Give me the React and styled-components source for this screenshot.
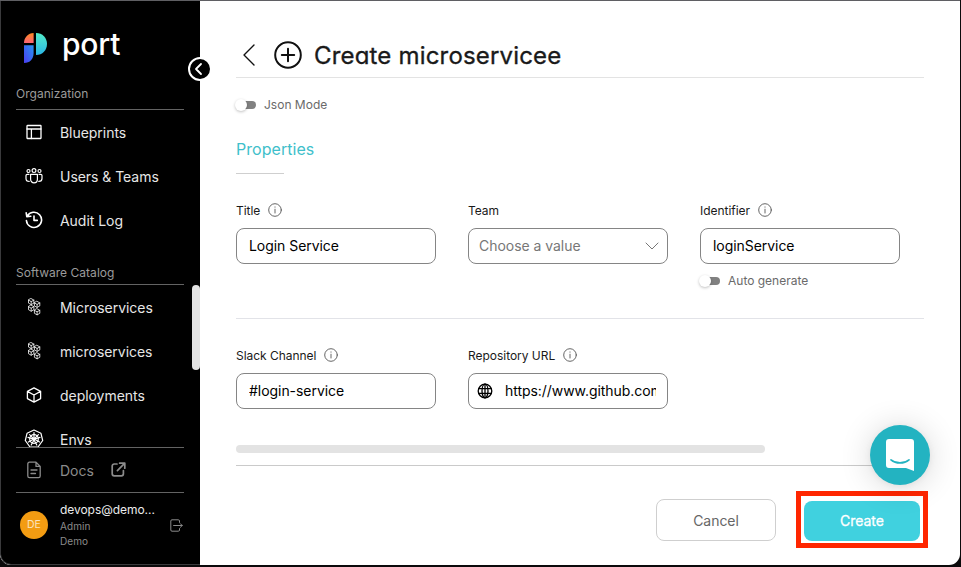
import React from "react";
import styled, { createGlobalStyle } from "styled-components";

const Global = createGlobalStyle`
  * { box-sizing: border-box; }
  html, body { margin: 0; padding: 0; background: #161415; }
  body { font-family: Inter, "Liberation Sans", sans-serif; overflow: hidden; }
  button, input { font-family: inherit; }
  svg { display: block; flex: none; }
`;

const Window = styled.div`
  position: relative;
  display: flex;
  width: 960px;
  height: 565px;
  border-top: 1px solid #5f5f63;
  border-radius: 0 0 11px 11px;
  background: #fff;
  overflow: hidden;
`;

const Backdrop = styled.div`
  width: 961px;
  height: 567px;
  background: #0b0a0b;
`;

const Sidebar = styled.aside`
  display: flex;
  flex-direction: column;
  flex: none;
  width: 200px;
  padding: 0 16px 0 15px;
  background: #000;
  color: #e4e4e4;
  border-left: 1px solid #3a3a3c;
  border-bottom: 1px solid #3a3a3c;
  border-radius: 0 0 0 11px;
`;

const Brand = styled.div`
  display: flex;
  gap: 14px;
  height: 83px;
  padding: 32px 0 0 8px;
`;

const BrandName = styled.span`
  margin-top: -9px;
  font-size: 30px;
  font-weight: 500;
  line-height: 40px;
  letter-spacing: -0.2px;
  color: #fff;
`;

const Nav = styled.nav`
  height: 363px;
  overflow: hidden;
`;

const GroupLabel = styled.div`
  height: ${(p) => (p.$spaced ? 42 : 26)}px;
  margin-bottom: 1px;
  padding-top: ${(p) => (p.$spaced ? 22 : 2)}px;
  border-bottom: 1px solid #636363;
  font-size: 12px;
  line-height: 16px;
  letter-spacing: 0.03px;
  color: #9b9b9b;
`;

const NavItem = styled.a`
  display: flex;
  align-items: center;
  height: 44px;
  padding-bottom: ${(p) => (p.$muted ? 0 : 2)}px;
  color: ${(p) => (p.$muted ? "#8b8b8b" : "#e6e6e6")};
  font-size: 14px;
  letter-spacing: -0.04px;
`;

const IconSlot = styled.span`
  display: flex;
  justify-content: center;
  width: 36px;
  margin-right: 8px;
  color: ${(p) => (p.$muted ? "#8b8b8b" : "#fff")};
`;

const External = styled.span`
  margin: 0 0 2px 17px;
`;

const SideFooter = styled.div`
  height: 46px;
  border-top: 1px solid #636363;
  border-bottom: 1px solid #636363;
`;

const User = styled.div`
  display: flex;
  align-items: center;
  height: 65px;
  padding-left: 4px;
  color: #8b8b8b;
`;

const Avatar = styled.div`
  display: grid;
  place-items: center;
  flex: none;
  width: 28px;
  height: 28px;
  margin-bottom: 2px;
  border-radius: 50%;
  background: #f39c12;
  color: #fbe3bd;
  font-size: 10.5px;
`;

const UserText = styled.div`
  flex: none;
  width: 110px;
  margin-left: 12px;
  padding-bottom: 1px;
  font-size: 10px;
  line-height: 15px;
  letter-spacing: 0.08px;
  color: #8b8b8b;
`;

const UserName = styled.div`
  padding-bottom: 1px;
  font-size: 12px;
  line-height: 16px;
  letter-spacing: -0.05px;
  color: #ececec;
`;

const SideScroll = styled.div`
  position: absolute;
  left: 192px;
  top: 284px;
  width: 8px;
  height: 85px;
  border-radius: 4px;
  background: #e3e3e3;
`;

const Collapse = styled.button`
  position: absolute;
  left: 188px;
  top: 56px;
  display: grid;
  place-items: center;
  width: 24px;
  height: 24px;
  padding: 0 2px 0 0;
  border: 2px solid #fff;
  border-radius: 50%;
  background: #000;
  color: #fff;
`;

const Main = styled.main`
  flex: 1;
  display: flex;
  flex-direction: column;
  padding: 0 36px;
`;

const Header = styled.header`
  display: flex;
  align-items: center;
  gap: 17px;
  height: 77px;
  padding: 31px 0 0 5px;
  border-bottom: 1px solid #e3e3e3;
  color: #111;
`;

const Title = styled.h1`
  margin: 2px 0 0 -5px;
  font-size: 24px;
  line-height: 30px;
  font-weight: 400;
  font-feature-settings: "cv11";
  letter-spacing: 0.18px;
  -webkit-text-stroke: 0.35px #1a1a1a;
  color: #1a1a1a;
`;

const Toggle = styled.label`
  display: flex;
  align-items: center;
  height: 16px;
  margin-top: ${(p) => p.$top}px;
  font-size: 12px;
  letter-spacing: 0;
  color: #6a6a6a;
`;

const ToggleText = styled.span`
  padding-bottom: 1px;
`;

const Track = styled.span`
  display: flex;
  align-items: center;
  width: 18px;
  height: 8px;
  margin: 0 8px 0 2px;
  border-radius: 4px;
  background: #818181;
`;

const Knob = styled.span`
  flex: none;
  width: 12px;
  height: 12px;
  margin-left: -3px;
  border-radius: 50%;
  background: #fff;
  box-shadow: 0 1px 3px rgba(0, 0, 0, 0.25);
`;

const SectionTitle = styled.h2`
  width: 48px;
  height: 36px;
  margin: 25px 0 27px;
  border-bottom: 1px solid #cfcfcf;
  font-size: 16px;
  line-height: 22px;
  font-weight: 400;
  letter-spacing: 0.05px;
  color: #3fbfcb;
`;

const FieldRow = styled.div`
  display: grid;
  grid-template-columns: repeat(3, 200px);
  column-gap: 32px;
  height: ${(p) => p.$height}px;
  padding-top: ${(p) => p.$top || 0}px;
  border-bottom: ${(p) => (p.$divider ? "1px solid #e2e3e8" : "none")};
`;

const FieldLabel = styled.div`
  display: flex;
  align-items: center;
  gap: 8px;
  height: 18px;
  margin-bottom: 9px;
  font-size: 12px;
  letter-spacing: -0.03px;
  color: #1a1a1a;
`;

const InfoSlot = styled.span`
  color: #555;
`;

const Control = styled.div`
  display: flex;
  align-items: center;
  height: 36px;
  padding: 0 ${(p) => (p.$select ? 8 : 11)}px 0 ${(p) => p.$left}px;
  border: 1px solid #858585;
  border-radius: 8px;
  font-size: 14px;
  letter-spacing: ${(p) => (p.$select ? -0.04 : -0.05)}px;
  color: ${(p) => (p.$select ? "#777" : "#000")};
`;

const Value = styled.span`
  flex: 1;
  overflow: hidden;
  white-space: nowrap;
  padding-bottom: 2px;
  margin-left: ${(p) => (p.$afterIcon ? 12 : 0)}px;
`;

const ScrollArea = styled.div`
  flex: none;
  height: 21px;
  border-bottom: 1px solid #cacaca;
`;

const ScrollThumb = styled.div`
  width: 529px;
  height: 8px;
  border-radius: 4px;
  background: #e3e3e3;
`;

const Actions = styled.footer`
  display: flex;
  justify-content: flex-end;
  gap: 20px;
  margin: 25px -4px 0 0;
`;

const Button = styled.button`
  width: ${(p) => (p.$primary ? 116 : 120)}px;
  height: ${(p) => (p.$primary ? 40 : 42)}px;
  margin-top: ${(p) => (p.$primary ? 0 : 8)}px;
  padding: 0 0 ${(p) => (p.$primary ? 1 : 0)}px;
  border: ${(p) => (p.$primary ? "none" : "1px solid #cfcfcf")};
  border-radius: 8px;
  background: ${(p) => (p.$primary ? "#40d1df" : "#fff")};
  color: ${(p) => (p.$primary ? "#fff" : "#666")};
  font-size: 14px;
  letter-spacing: -0.04px;
  -webkit-text-stroke: ${(p) => (p.$primary ? "0.3px #fff" : "0")};
`;

const Highlight = styled.div`
  display: grid;
  place-items: center;
  width: 132px;
  height: 57px;
  padding-top: 3px;
  border: 5px solid #ff2600;
`;

const Chat = styled.button`
  position: absolute;
  left: 870px;
  top: 424px;
  display: grid;
  place-items: center;
  width: 60px;
  height: 60px;
  padding: 0;
  border: none;
  border-radius: 50%;
  background: #23b3c1;
  box-shadow: 0 1px 6px rgba(0, 0, 0, 0.06), 0 2px 32px rgba(0, 0, 0, 0.16);
`;

const Stroke = ({ w = 18, h, box = "0 0 24 24", sw = 1.8, children }) => (
  <svg width={w} height={h || w} viewBox={box} fill="none" stroke="currentColor"
    strokeWidth={sw} strokeLinecap="round" strokeLinejoin="round">{children}</svg>
);

const PortMark = () => (
  <svg width="24" height="31" viewBox="0 0 24 31">
    <defs>
      <linearGradient id="warm" x1="0" y1="0" x2="0" y2="1">
        <stop offset="0" stopColor="#ff8a1f" /><stop offset="1" stopColor="#fb6377" />
      </linearGradient>
      <linearGradient id="teal" x1="0" y1="0" x2="0" y2="1">
        <stop offset="0" stopColor="#52ecc8" /><stop offset="1" stopColor="#2bb5e6" />
      </linearGradient>
      <linearGradient id="blue" x1="1" y1="0" x2="0" y2="1">
        <stop offset="0" stopColor="#2795f3" /><stop offset="1" stopColor="#4b3df2" />
      </linearGradient>
    </defs>
    <path d="M9.6 0V10H0C0 4.5 4.2 0 9.6 0Z" fill="url(#warm)" />
    <path d="M0 12.2H9.6V20C9.6 26 6 30 0 30Z" fill="url(#blue)" />
    <path d="M12 0C18.5 0 23 4.8 23 11C23 17.2 18.5 22 12 22Z" fill="url(#teal)" />
  </svg>
);

const LayoutIcon = () => (
  <Stroke w={16} box="0 0 16 16" sw={1.3}>
    <rect x="1" y="1.5" width="14" height="13" rx="0.4" /><path d="M1 5H15M5.4 5V14.5" />
  </Stroke>
);

const TeamIcon = () => (
  <Stroke w={18} h={16} box="0 0 18 16" sw={1.2}>
    <circle cx="9" cy="2.6" r="1.9" /><circle cx="3.5" cy="3" r="1.5" /><circle cx="14.5" cy="3" r="1.5" />
    <path d="M5.6 6.3H12.4V11.2C12.4 13.2 11 14.8 9 14.8S5.6 13.2 5.6 11.2Z" />
    <path d="M4 6.3H2.2C1.4 6.3 1 6.8 1 7.5V10.5C1 12.3 2.2 13.4 4.2 13.4M14 6.3H15.8C16.6 6.3 17 6.8 17 7.5V10.5C17 12.3 15.8 13.4 13.8 13.4" />
  </Stroke>
);

const HistoryIcon = () => (
  <Stroke w={18} box="0 0 18 18" sw={1.6}>
    <path d="M2.3 5.2A7.6 7.6 0 1 1 1.4 9.5M1.2 1.8L1.8 5.6L5.8 5.2M9 5V9.4H12.3" />
  </Stroke>
);

const Cube = ({ x, y }) => (
  <g transform={`translate(${x} ${y})`}>
    <path d="M0 -3L2.7 -1.5V1.5L0 3L-2.7 1.5V-1.5ZM-2.7 -1.5L0 0L2.7 -1.5M0 0V3" />
  </g>
);

const CubesIcon = () => (
  <Stroke w={14} h={18} box="0 0 14 18" sw={0.8}>
    <Cube x={4.2} y={3.6} /><Cube x={10.1} y={6.4} /><Cube x={4.2} y={10.2} /><Cube x={10.1} y={13.8} />
  </Stroke>
);

const BoxIcon = () => (
  <Stroke w={16} box="0 0 16 16" sw={1.3}>
    <path d="M8 0.9L14.6 4.4V11.6L8 15.1L1.4 11.6V4.4ZM1.4 4.4L8 8L14.6 4.4M8 8V15.1" />
  </Stroke>
);

const HelmIcon = () => (
  <Stroke w={20} box="0 0 20 20" sw={1.2}>
    <path d="M10 1L16.9 4.2L18.7 11.5L14 18H6L1.3 11.5L3.1 4.2Z" />
    <circle cx="10" cy="10" r="4.3" /><circle cx="10" cy="10" r="1" />
    <path d="M10 3.6V9M10 11L7.2 16M10 11L12.8 16M9 9.8L4 8.4M11 9.8L16 8.4M9.3 9.3L5.6 5.6M10.7 9.3L14.4 5.6M9 10.5L4.4 13M11 10.5L15.6 13" />
  </Stroke>
);

const DocIcon = () => (
  <Stroke w={16} h={18} box="0 0 16 18" sw={1.3}>
    <path d="M10 1.2H3.4A1.6 1.6 0 0 0 1.8 2.8V15A1.6 1.6 0 0 0 3.4 16.6H12.6A1.6 1.6 0 0 0 14.2 15V5.4ZM10 1.2V5.4H14.2M5 9H11M5 12.5H9.5" />
  </Stroke>
);

const ExternalIcon = () => (
  <Stroke w={15} box="0 0 15 15" sw={1.7}>
    <path d="M6 2H3.2A2 2 0 0 0 1.2 4V11.8A2 2 0 0 0 3.2 13.8H10.4A2 2 0 0 0 12.4 11.8V8.5M8.6 1.2H13.8V6.2M13.3 1.7L6.4 8.6" />
  </Stroke>
);

const LogoutIcon = () => (
  <Stroke w={13} box="0 0 13 13" sw={1}>
    <path d="M9.5 3.4V2A1.2 1.2 0 0 0 8.3 0.8H2A1.2 1.2 0 0 0 0.8 2V11A1.2 1.2 0 0 0 2 12.2H8.3A1.2 1.2 0 0 0 9.5 11V9.6M3.6 6.5H12.2M10.4 4.7L12.2 6.5L10.4 8.3" />
  </Stroke>
);

const InfoIcon = () => (
  <Stroke w={14} box="0 0 14 14" sw={0.9}>
    <circle cx="7" cy="7" r="6.3" /><path d="M7 6.2V10M7 3.9V4.2" />
  </Stroke>
);

const GlobeIcon = () => (
  <Stroke w={16} box="0 0 16 16" sw={1.3}>
    <circle cx="8" cy="8" r="6.8" /><ellipse cx="8" cy="8" rx="3" ry="6.8" />
    <path d="M1.8 5.6H14.2M1.8 10.4H14.2M8 1.2V14.8" />
  </Stroke>
);

const PlusIcon = () => (
  <Stroke w={28} box="0 0 28 28" sw={2}>
    <circle cx="14" cy="14" r="12.8" /><path d="M14 7.8V20.2M7.8 14H20.2" />
  </Stroke>
);

const Field = ({ label, info = true, children }) => (
  <div>
    <FieldLabel>{label}{info && <InfoSlot><InfoIcon /></InfoSlot>}</FieldLabel>
    {children}
  </div>
);

const Switch = ({ top, children }) => (
  <Toggle $top={top}><Track><Knob /></Track><ToggleText>{children}</ToggleText></Toggle>
);

const Item = ({ icon, children }) => (
  <NavItem><IconSlot>{icon}</IconSlot>{children}</NavItem>
);

export default function App() {
  return (
    <Backdrop>
      <Global />
      <Window>
        <Sidebar>
          <Brand><PortMark /><BrandName>port</BrandName></Brand>
          <Nav>
            <GroupLabel>Organization</GroupLabel>
            <Item icon={<LayoutIcon />}>Blueprints</Item>
            <Item icon={<TeamIcon />}>Users &amp; Teams</Item>
            <Item icon={<HistoryIcon />}>Audit Log</Item>
            <GroupLabel $spaced>Software Catalog</GroupLabel>
            <Item icon={<CubesIcon />}>Microservices</Item>
            <Item icon={<CubesIcon />}>microservices</Item>
            <Item icon={<BoxIcon />}>deployments</Item>
            <Item icon={<HelmIcon />}>Envs</Item>
          </Nav>
          <SideFooter>
            <NavItem $muted>
              <IconSlot $muted><DocIcon /></IconSlot>Docs
              <External><ExternalIcon /></External>
            </NavItem>
          </SideFooter>
          <User>
            <Avatar>DE</Avatar>
            <UserText>
              <UserName>devops@demo...</UserName>
              <div>Admin</div>
              <div>Demo</div>
            </UserText>
            <LogoutIcon />
          </User>
        </Sidebar>
        <Main>
          <Header>
            <Stroke w={16} h={24} box="0 0 16 24" sw={1.4}><path d="M13 2L3 12L13 22" /></Stroke>
            <PlusIcon />
            <Title>Create microservicee</Title>
          </Header>
          <Switch top={19}>Json Mode</Switch>
          <SectionTitle>Properties</SectionTitle>
          <FieldRow $height={118} $divider>
            <Field label="Title"><Control $left={12}><Value>Login Service</Value></Control></Field>
            <Field label="Team" info={false}>
              <Control $select $left={10}>
                <Value>Choose a value</Value>
                <Stroke w={14} h={8} box="0 0 14 8" sw={1}><path d="M1 1L7 7L13 1" /></Stroke>
              </Control>
            </Field>
            <Field label="Identifier">
              <Control $left={12}><Value>loginService</Value></Control>
              <Switch top={9}>Auto generate</Switch>
            </Field>
          </FieldRow>
          <FieldRow $height={126} $top={27}>
            <Field label="Slack Channel"><Control $left={12}><Value>#login-service</Value></Control></Field>
            <Field label="Repository URL">
              <Control $left={8}><GlobeIcon /><Value $afterIcon>https://www.github.com</Value></Control>
            </Field>
          </FieldRow>
          <ScrollArea><ScrollThumb /></ScrollArea>
          <Actions>
            <Button>Cancel</Button>
            <Highlight><Button $primary>Create</Button></Highlight>
          </Actions>
        </Main>
        <SideScroll />
        <Collapse aria-label="Collapse">
          <Stroke w={10} h={14} box="0 0 10 14" sw={1.8}><path d="M7 2L2 7L7 12" /></Stroke>
        </Collapse>
        <Chat aria-label="Chat">
          <svg width="28" height="32" viewBox="0 0 28 32">
            <path d="M3 0H25A3 3 0 0 1 28 3V32L20 29H3A3 3 0 0 1 0 26V3A3 3 0 0 1 3 0Z" fill="#fff" />
            <path d="M5 20.8C10 25 18 25 23 20.8" fill="none" stroke="#23b3c1" strokeWidth="1.7" strokeLinecap="round" />
          </svg>
        </Chat>
      </Window>
    </Backdrop>
  );
}
